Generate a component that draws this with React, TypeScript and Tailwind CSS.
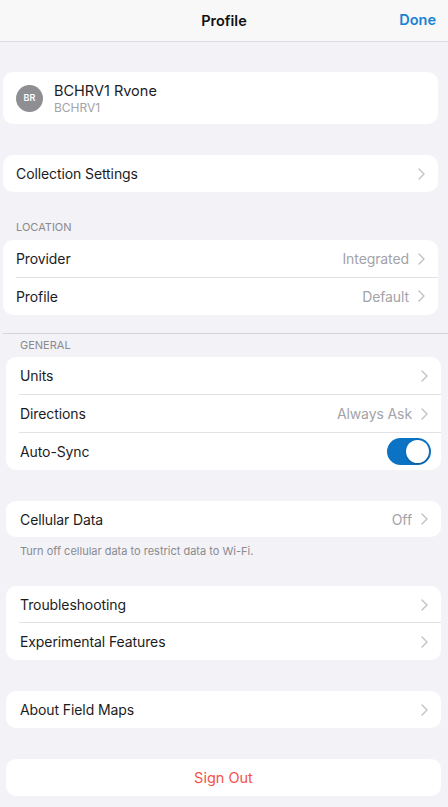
import React from "react";

const Chevron = () => (
  <svg width="7" height="12" viewBox="0 0 7 12" className="ml-[9px] shrink-0">
    <path d="M1 1l5 5-5 5" fill="none" stroke="#c2c2c6" strokeWidth="1.4" strokeLinecap="round" strokeLinejoin="round" />
  </svg>
);

const Row = ({ label, value, chevron = true, divider = false, h = "h-[37px]", pl = "pl-[13px]" }: { label: string; value?: string; chevron?: boolean; divider?: boolean; h?: string; pl?: string }) => (
  <div className={`flex items-center ${h} ${pl} relative`}>
    <span className="text-[14px] tracking-[-0.1px] text-[#1c1c1e] flex-1">{label}</span>
    {value && <span className="text-[14px] tracking-[-0.1px] text-[#a3a3a8]">{value}</span>}
    {chevron && <div className="pr-[13px]"><Chevron /></div>}
    {divider && <div className="absolute bottom-0 right-0 left-[13px] h-px bg-[#e2e2e6]" />}
  </div>
);

export default function App() {
  return (
    <div className="w-[448px] h-[807px] bg-[#f2f2f7] overflow-hidden" style={{ fontFamily: "Inter, 'Noto Sans', sans-serif" }}>
      <div className="h-[42px] bg-[#f8f8f9] border-b border-[#dcdce0] flex items-center justify-center relative">
        <span className="text-[14.5px] font-semibold text-[#111]">Profile</span>
        <span className="absolute right-[12px] top-[9px] text-[14.5px] font-semibold text-[#1883d3]">Done</span>
      </div>

      <div className="ml-[3px] mr-[10px]">
        <div className="mt-[30px] h-[52px] bg-white rounded-[10px] flex items-center pl-[13px]">
          <div className="w-[27px] h-[27px] rounded-full bg-[#8e8e93] flex items-center justify-center text-white text-[9px] font-semibold">BR</div>
          <div className="ml-[11px] flex flex-col">
            <span className="text-[14.5px] leading-[18px] text-[#1c1c1e]">BCHRV1 Rvone</span>
            <span className="text-[12px] leading-[15px] text-[#a3a3a8]">BCHRV1</span>
          </div>
        </div>

        <div className="mt-[31px] bg-white rounded-[10px]">
          <Row label="Collection Settings" />
        </div>

        <div className="mt-[28px] pl-[13px] text-[11px] leading-[14px] text-[#8a8a8e]">LOCATION</div>
        <div className="mt-[6px] bg-white rounded-[10px] overflow-hidden">
          <Row label="Provider" value="Integrated" divider h="h-[37.5px]" />
          <Row label="Profile" value="Default" h="h-[37.5px]" />
        </div>
      </div>

      <div className="mt-[18px] ml-[3px] h-px bg-[#d6d6da]" />

      <div className="ml-[6px] mr-[7px]">
        <div className="mt-[4px] pl-[14px] text-[11px] leading-[14px] text-[#8a8a8e]">GENERAL</div>
        <div className="mt-[5px] bg-white rounded-[10px] overflow-hidden">
          <Row label="Units" divider pl="pl-[14px]" h="h-[37.5px]" />
          <Row label="Directions" value="Always Ask" divider pl="pl-[14px]" h="h-[38.5px]" />
          <div className="flex items-center h-[37px] pl-[14px]">
            <span className="text-[14px] tracking-[-0.1px] text-[#1c1c1e] flex-1">Auto-Sync</span>
            <div className="mr-[10px] w-[44px] h-[27px] rounded-full bg-[#0b72c4] flex items-center justify-end pr-[2px]">
              <div className="w-[23px] h-[23px] rounded-full bg-white shadow-[0_1px_2px_rgba(0,0,0,0.25)]" />
            </div>
          </div>
        </div>

        <div className="mt-[31px] bg-white rounded-[10px]">
          <Row label="Cellular Data" value="Off" pl="pl-[14px]" h="h-[36px]" />
        </div>
        <div className="mt-[7px] pl-[14px] text-[11px] leading-[14px] text-[#8a8a8e]">Turn off cellular data to restrict data to Wi-Fi.</div>

        <div className="mt-[28px] bg-white rounded-[10px] overflow-hidden">
          <Row label="Troubleshooting" divider pl="pl-[14px]" />
          <Row label="Experimental Features" pl="pl-[14px]" />
        </div>

        <div className="mt-[31px] bg-white rounded-[10px]">
          <Row label="About Field Maps" pl="pl-[14px]" />
        </div>

        <div className="mt-[31px] h-[37px] bg-white rounded-[10px] flex items-center justify-center">
          <span className="text-[14.5px] text-[#f4524b]">Sign Out</span>
        </div>
      </div>
    </div>
  );
}
